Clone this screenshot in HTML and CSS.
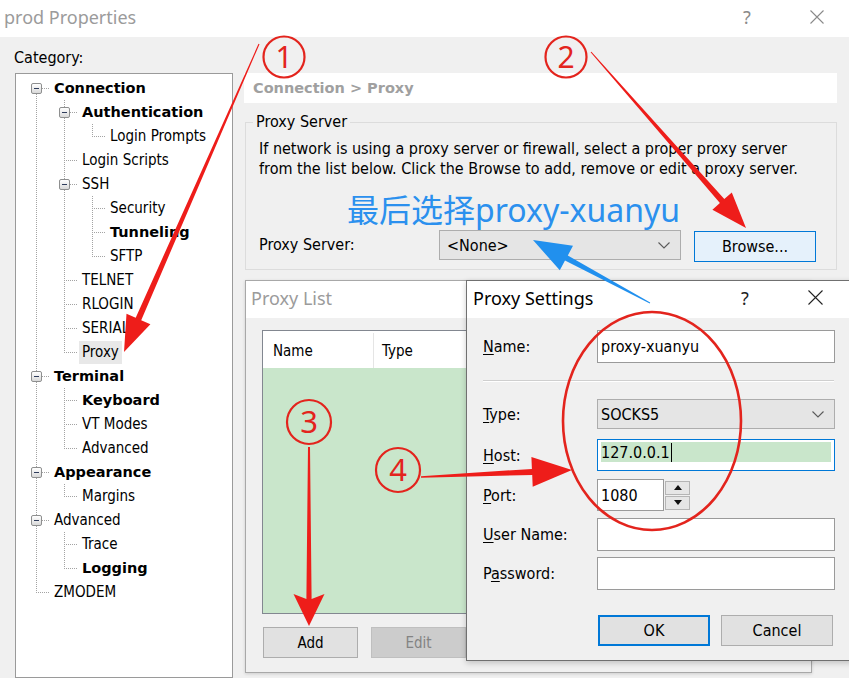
FILE: index.html
```html
<!DOCTYPE html>
<html>
<head>
<meta charset="utf-8">
<title>prod Properties</title>
<link rel="stylesheet" href="styles.css">
</head>
<body>
<div class="app">
  <div class="titlebar">
    <span class="title">prod Properties</span>
    <div class="ctrls">
      <span class="ctrl help">?</span>
      <span class="ctrl"><svg width="14" height="14" viewBox="0 0 14 14"><path d="M0.5 0.5L13.5 13.5M13.5 0.5L0.5 13.5" stroke="#8a8a8a" stroke-width="1.1" fill="none"/></svg></span>
    </div>
  </div>

  <div class="content">
    <div class="leftcol">
      <div class="cat-label">Category:</div>
      <div class="tree">
        <div class="row"><i class="c c-first"><b class="exp"></b></i><span class="t b">Connection</span></div>
        <div class="row"><i class="c c-pipe"></i><i class="c c-tee"><b class="exp"></b></i><span class="t b">Authentication</span></div>
        <div class="row"><i class="c c-pipe"></i><i class="c c-pipe"></i><i class="c c-elbow"></i><span class="t">Login Prompts</span></div>
        <div class="row"><i class="c c-pipe"></i><i class="c c-tee"></i><span class="t">Login Scripts</span></div>
        <div class="row"><i class="c c-pipe"></i><i class="c c-tee"><b class="exp"></b></i><span class="t">SSH</span></div>
        <div class="row"><i class="c c-pipe"></i><i class="c c-pipe"></i><i class="c c-tee"></i><span class="t">Security</span></div>
        <div class="row"><i class="c c-pipe"></i><i class="c c-pipe"></i><i class="c c-tee"></i><span class="t b">Tunneling</span></div>
        <div class="row"><i class="c c-pipe"></i><i class="c c-pipe"></i><i class="c c-elbow"></i><span class="t">SFTP</span></div>
        <div class="row"><i class="c c-pipe"></i><i class="c c-tee"></i><span class="t">TELNET</span></div>
        <div class="row"><i class="c c-pipe"></i><i class="c c-tee"></i><span class="t">RLOGIN</span></div>
        <div class="row"><i class="c c-pipe"></i><i class="c c-tee"></i><span class="t">SERIAL</span></div>
        <div class="row"><i class="c c-pipe"></i><i class="c c-elbow"></i><span class="t sel">Proxy</span></div>
        <div class="row"><i class="c c-tee"><b class="exp"></b></i><span class="t b">Terminal</span></div>
        <div class="row"><i class="c c-pipe"></i><i class="c c-tee"></i><span class="t b">Keyboard</span></div>
        <div class="row"><i class="c c-pipe"></i><i class="c c-tee"></i><span class="t">VT Modes</span></div>
        <div class="row"><i class="c c-pipe"></i><i class="c c-elbow"></i><span class="t">Advanced</span></div>
        <div class="row"><i class="c c-tee"><b class="exp"></b></i><span class="t b">Appearance</span></div>
        <div class="row"><i class="c c-pipe"></i><i class="c c-elbow"></i><span class="t">Margins</span></div>
        <div class="row"><i class="c c-tee"><b class="exp"></b></i><span class="t">Advanced</span></div>
        <div class="row"><i class="c c-pipe"></i><i class="c c-tee"></i><span class="t">Trace</span></div>
        <div class="row"><i class="c c-pipe"></i><i class="c c-elbow"></i><span class="t b">Logging</span></div>
        <div class="row"><i class="c c-elbow"></i><span class="t">ZMODEM</span></div>
      </div>
    </div>

    <div class="rightcol">
      <div class="crumb">Connection &gt; Proxy</div>
      <div class="group">
        <div class="group-title">Proxy Server</div>
        <p class="desc">If network is using a proxy server or firewall, select a proper proxy server<br>from the list below. Click the Browse to add, remove or edit a proxy server.</p>
        <div class="note">最后选择proxy-xuanyu</div>
        <div class="ps-row">
          <span class="ps-label">Proxy Server:</span>
          <div class="combo wide"><span class="combo-text">&lt;None&gt;</span><svg class="chev" width="12" height="7" viewBox="0 0 12 7"><path d="M0.5 0.5L6 6L11.5 0.5" stroke="#5a5a5a" stroke-width="1.1" fill="none"/></svg></div>
          <button class="btn browse">Browse...</button>
        </div>
      </div>
    </div>
  </div>

  <div class="win plist">
    <div class="win-title"><span class="wt inactive">Proxy List</span></div>
    <div class="plist-body">
      <div class="list">
        <div class="list-head"><span class="col col-name">Name</span><span class="col col-type">Type</span><span class="col col-rest"></span></div>
      </div>
      <div class="plist-btns">
        <button class="btn">Add</button>
        <button class="btn disabled">Edit</button>
      </div>
    </div>
  </div>

  <div class="win pset">
    <div class="win-title">
      <span class="wt">Proxy Settings</span>
      <div class="ctrls dark">
        <span class="ctrl help">?</span>
        <span class="ctrl"><svg width="15" height="15" viewBox="0 0 15 15"><path d="M0.5 0.5L14.5 14.5M14.5 0.5L0.5 14.5" stroke="#222" stroke-width="1.1" fill="none"/></svg></span>
      </div>
    </div>
    <div class="pset-body">
      <div class="f-row r-name"><span class="lbl"><u>N</u>ame:</span><div class="inp"><span class="val">proxy-xuanyu</span></div></div>
      <div class="sep"></div>
      <div class="f-row r-type"><span class="lbl"><u>T</u>ype:</span><div class="combo full"><span class="combo-text">SOCKS5</span><svg class="chev" width="12" height="7" viewBox="0 0 12 7"><path d="M0.5 0.5L6 6L11.5 0.5" stroke="#5a5a5a" stroke-width="1.1" fill="none"/></svg></div></div>
      <div class="f-row r-host"><span class="lbl"><u>H</u>ost:</span><div class="inp focus"><span class="hl"><span class="val">127.0.0.1</span><span class="caret"></span></span></div></div>
      <div class="f-row r-port"><span class="lbl"><u>P</u>ort:</span><div class="inp port"><span class="val">1080</span></div>
        <div class="spin">
          <span class="sb"><svg width="8" height="5" viewBox="0 0 8 5"><path d="M0 5L4 0L8 5Z" fill="#111"/></svg></span>
          <span class="sb"><svg width="8" height="5" viewBox="0 0 8 5"><path d="M0 0L8 0L4 5Z" fill="#111"/></svg></span>
        </div>
      </div>
      <div class="f-row r-user"><span class="lbl"><u>U</u>ser Name:</span><div class="inp"></div></div>
      <div class="f-row r-pass"><span class="lbl">P<u>a</u>ssword:</span><div class="inp"></div></div>
      <div class="pset-btns">
        <button class="btn ok">OK</button>
        <button class="btn cancel">Cancel</button>
      </div>
    </div>
  </div>

  <svg class="annot" width="849" height="678" viewBox="0 0 849 678">
    <g fill="#ee1d1a">
      <polygon points="259.5,44.2 141.2,320.2 150.4,324.3 124,352 126.5,313.8 135.7,317.8 258.5,43.8"/>
      <polygon points="590.6,52.3 719.9,203.1 712.4,209.7 746,228 731.8,192.5 724.3,199.1 591.4,51.7"/>
      <polygon points="308,447 310,447 311.6,599 324.5,594 309,626 293.5,594 306.4,599"/>
      <polygon points="421,477.8 532.2,474.9 532.7,486.8 572,470 531.4,456.9 531.9,468.9 421,476.2"/>
    </g>
    <polygon fill="#2190ee" points="650.2,302.6 567.8,255.4 573.0,245.7 533,240 559.8,270.3 565.0,260.6 649.8,303.4"/>
    <ellipse cx="652" cy="421" rx="89" ry="109" fill="none" stroke="#e3241d" stroke-width="2.6"/>
    <g fill="none" stroke="#e3241d" stroke-width="2.2">
      <circle cx="284" cy="57" r="20.5"/>
      <circle cx="566" cy="57" r="20.5"/>
      <circle cx="309" cy="422" r="22"/>
      <circle cx="398" cy="470" r="22"/>
    </g>
    <g class="num" fill="#e3241d" text-anchor="middle">
      <text x="284" y="68" font-size="30">1</text>
      <text x="566" y="68" font-size="30">2</text>
      <text x="309" y="433" font-size="31">3</text>
      <text x="398" y="481" font-size="31">4</text>
    </g>
  </svg>
</div>
</body>
</html>
```
FILE: styles.css
```css
* { box-sizing: border-box; margin: 0; padding: 0; }
html, body { width: 849px; height: 678px; overflow: hidden; }
body {
  font-family: "DejaVu Sans Condensed", "DejaVu Sans", sans-serif;
  font-stretch: condensed;
  color: #000;
  background: #f0f0f0;
}
.app {
  position: relative;
  width: 849px;
  height: 678px;
  overflow: hidden;
  background: #f0f0f0;
}

/* title bars */
.titlebar {
  height: 37px;
  background: #fff;
  display: flex;
  align-items: center;
  padding-bottom: 4px;
}
.title {
  flex: 1;
  margin-left: 4px;
  font-family: "Noto Sans", sans-serif;
  font-stretch: normal;
  font-size: 18px;
  line-height: 24px;
  color: #9b9b9b;
}
.ctrls {
  display: flex;
  gap: 24px;
  margin-right: 9px;
}
.ctrl {
  width: 46px;
  height: 24px;
  display: flex;
  align-items: center;
  justify-content: center;
}
.help {
  font-family: "Noto Sans", sans-serif;
  font-stretch: normal;
  font-size: 18px;
  color: #8a8a8a;
}
.ctrls.dark .help { color: #222; }

/* main content */
.content {
  display: flex;
  gap: 11px;
  padding-left: 14px;
  height: 641px;
}
.leftcol {
  width: 219px;
  display: flex;
  flex-direction: column;
}
.cat-label {
  margin-top: 12px;
  height: 18px;
  font-size: 16px;
  line-height: 18px;
}
.tree {
  margin-top: 6px;
  margin-left: 1px;
  width: 218px;
  height: 620px;
  border: 1px solid #9a9a9a;
  background: #fff;
  padding: 2px 0 0 6px;
}
.row {
  display: flex;
  align-items: center;
  height: 24px;
}
.c {
  --v: repeating-linear-gradient(to bottom, #a3a3a3 0 1px, transparent 1px 2px);
  --h: repeating-linear-gradient(to right, #a3a3a3 0 1px, transparent 1px 2px);
  display: block;
  flex: none;
  width: 28px;
  height: 24px;
  align-self: stretch;
}
.c-pipe { background: var(--v) 14px 0 / 1px 24px no-repeat; }
.c-tee { background: var(--h) 14px 12px / 14px 1px no-repeat, var(--v) 14px 0 / 1px 24px no-repeat; }
.c-elbow { background: var(--h) 14px 12px / 14px 1px no-repeat, var(--v) 14px 0 / 1px 12px no-repeat; }
.c-first { background: var(--h) 14px 12px / 14px 1px no-repeat, var(--v) 14px 12px / 1px 12px no-repeat; }
.exp {
  display: block;
  width: 11px;
  height: 11px;
  margin: 7px 0 0 9px;
  border: 1px solid #8e8f8f;
  border-radius: 2px;
  background:
    linear-gradient(#2f3d5c, #2f3d5c) center / 5px 1px no-repeat,
    linear-gradient(#ffffff, #d9d9d9);
}
.t {
  margin-left: 4px;
  font-size: 15px;
  line-height: 20px;
  white-space: nowrap;
}
.t.b {
  font-family: "DejaVu Sans", sans-serif;
  font-stretch: normal;
  font-weight: bold;
  font-size: 14.5px;
}
.t.sel {
  margin-left: 1px;
  padding: 0 3px;
  line-height: 23px;
  background: #e8e8e8;
}

/* right column */
.rightcol {
  width: 593px;
  display: flex;
  flex-direction: column;
}
.crumb {
  margin-top: 36px;
  height: 30px;
  background: #fff;
  padding-left: 9px;
  font-family: "DejaVu Sans", sans-serif;
  font-stretch: normal;
  font-weight: bold;
  font-size: 14.5px;
  line-height: 30px;
  color: #a0a0a0;
}
.group {
  margin-top: 19px;
  margin-left: 1px;
  width: 592px;
  border: 1px solid #dcdcdc;
  padding: 0 0 7px 13px;
}
.group-title {
  width: fit-content;
  margin: -10px 0 0 -6px;
  padding: 0 3px;
  background: #f0f0f0;
  font-size: 16px;
  line-height: 18px;
}
.desc {
  margin-top: 8px;
  font-size: 16px;
  line-height: 20px;
  white-space: nowrap;
}
.note {
  margin: 13px 0 0 88px;
  font-family: "Noto Sans", "Noto Sans CJK SC", sans-serif;
  font-stretch: normal;
  font-size: 32px;
  line-height: 36px;
  height: 36px;
  color: #2b90ee;
  white-space: nowrap;
}
.ps-row {
  margin-top: 2px;
  display: flex;
  align-items: flex-start;
  height: 32px;
}
.ps-label {
  width: 180px;
  font-size: 16px;
  line-height: 30px;
}
.combo {
  display: flex;
  align-items: center;
  background: #e5e5e5;
  border: 1px solid #adadad;
  padding-left: 7px;
  padding-right: 10px;
  font-size: 16px;
}
.combo.wide { width: 242px; height: 30px; }
.combo-text { flex: 1; }
.chev { flex: none; }
.btn {
  font-family: "DejaVu Sans Condensed", "DejaVu Sans", sans-serif;
  font-stretch: condensed;
  font-size: 15px;
  color: #000;
  background: #e1e1e1;
  border: 1px solid #adadad;
  height: 31px;
  width: 95px;
}
.btn.browse {
  margin: 1px 0 0 13px;
  width: 122px;
  height: 31px;
  background: #e5f1fb;
  border-color: #0078d7;
  font-size: 16px;
}
.btn.disabled {
  background: #cccccc;
  border-color: #bfbfbf;
  color: #838383;
}

/* floating dialogs */
.win {
  position: absolute;
  display: flex;
  flex-direction: column;
  background: #f0f0f0;
  overflow: hidden;
}
.win-title {
  height: 37px;
  flex: none;
  background: #fff;
  display: flex;
  align-items: center;
  padding-bottom: 4px;
}
.wt {
  flex: 1;
  padding-left: 5px;
  font-family: "Noto Sans", sans-serif;
  font-stretch: normal;
  font-size: 18px;
  line-height: 24px;
  color: #000;
}
.wt.inactive { color: #9b9b9b; }

.plist {
  left: 245px;
  top: 280px;
  width: 567px;
  height: 393px;
  border: 1px solid #a8a8a8;
  box-shadow: 0 1px 3px rgba(0, 0, 0, 0.15);
}
.plist-body {
  padding: 12px 0 0 16px;
}
.list {
  width: 530px;
  height: 284px;
  border: 1px solid #828790;
  background: #c9e6cb;
}
.list-head {
  display: flex;
  height: 37px;
  background: #fff;
  font-size: 15px;
  line-height: 37px;
  padding-top: 2px;
}
.col { display: block; }
.col-name { width: 111px; padding-left: 10px; border-right: 1px solid #e5e5e5; }
.col-type { width: 110px; padding-left: 8px; border-right: 1px solid #e5e5e5; }
.col-rest { flex: 1; }
.plist-btns {
  margin: 13px 0 0 1px;
  display: flex;
  gap: 13px;
}

.pset {
  left: 466px;
  top: 280px;
  width: 395px;
  height: 381px;
  border: 1px solid #707070;
  box-shadow: 0 2px 6px rgba(0, 0, 0, 0.2);
}
.pset .wt { padding-left: 6px; }
.pset .ctrls { margin-right: 22px; }
.pset-body {
  padding: 12px 0 0 16px;
  font-size: 16px;
}
.f-row {
  display: flex;
  align-items: center;
}
.lbl {
  width: 114px;
  flex: none;
  font-size: 16px;
}
.lbl u { text-underline-offset: 2px; }
.inp {
  width: 238px;
  height: 100%;
  background: #fff;
  border: 1px solid #9a9a9a;
  display: flex;
  align-items: center;
  padding-left: 3px;
  font-size: 16px;
}
.r-name { height: 33px; }
.sep {
  margin-top: 17px;
  width: 351px;
  height: 2px;
  border-top: 1px solid #cfcfcf;
  border-bottom: 1px solid #fff;
}
.r-type { margin-top: 17px; height: 30px; }
.combo.full { width: 238px; height: 30px; padding-left: 3px; }
.r-host { margin-top: 10px; height: 32px; }
.inp.focus {
  border-color: #0078d7;
  padding: 0 3px;
  align-items: flex-start;
}
.hl {
  margin-top: 2px;
  width: 100%;
  height: 20px;
  background: #c9e6cb;
  display: flex;
  align-items: center;
}
.caret {
  width: 1px;
  height: 19px;
  background: #000;
  margin-left: 1px;
}
.r-port { margin-top: 8px; height: 32px; }
.inp.port { width: 67px; }
.spin {
  margin-left: 1px;
  height: 100%;
  display: flex;
  flex-direction: column;
  justify-content: center;
  gap: 1px;
}
.sb {
  width: 25px;
  height: 14px;
  background: #e6e6e6;
  border: 1px solid #b5b5b5;
  display: flex;
  align-items: center;
  justify-content: center;
}
.r-user { margin-top: 7px; height: 33px; }
.r-pass { margin-top: 6px; height: 33px; }
.pset-btns {
  margin: 25px 0 0 115px;
  display: flex;
  gap: 11px;
}
.btn.ok, .btn.cancel {
  width: 112px;
  height: 31px;
  font-size: 16px;
}
.btn.ok { border: 2px solid #0078d7; }

/* annotations */
.annot {
  position: absolute;
  left: 0;
  top: 0;
  pointer-events: none;
}
.num text {
  font-family: "Noto Sans", sans-serif;
}
```
